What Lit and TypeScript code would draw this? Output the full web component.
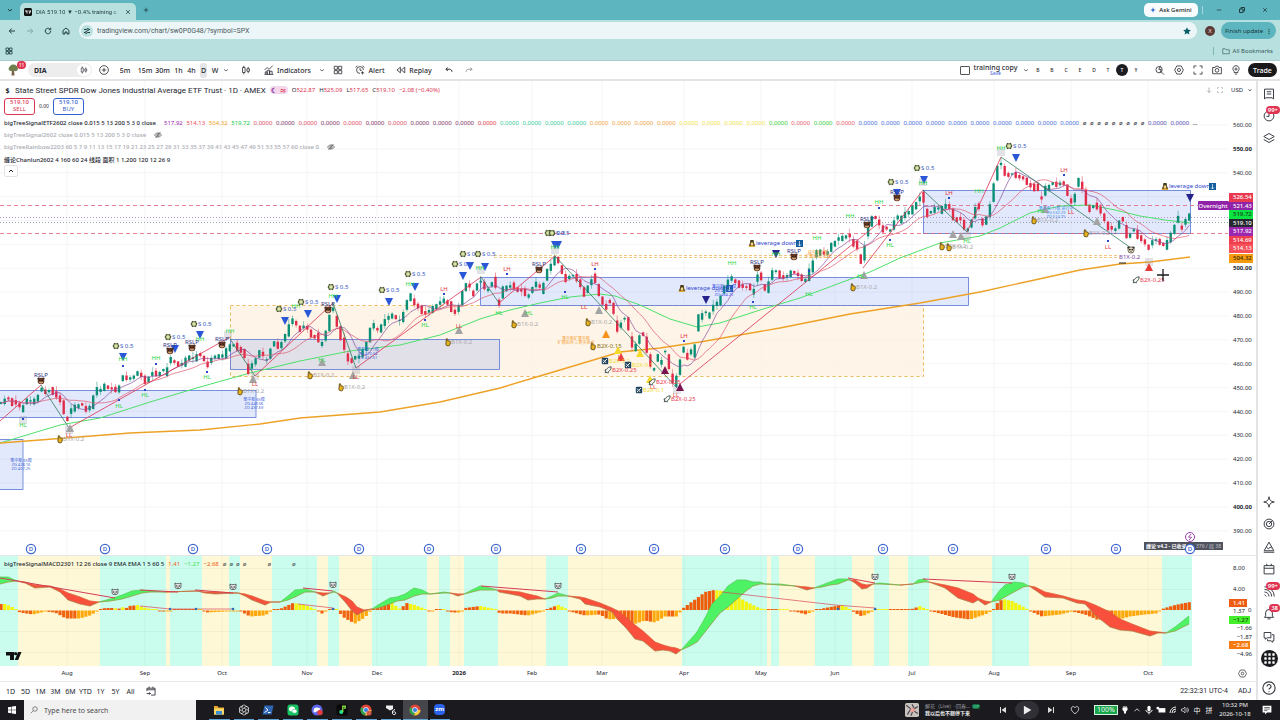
import { LitElement, html, svg, css } from "lit";
import { customElement } from "lit/decorators.js";
import { unsafeSVG } from "lit/directives/unsafe-svg.js";

type P = [number, number];

/** Turns "x,y x,y" lists into number tuples. */
const parse = (s: string): number[][] => s.trim().split(/\s+/).map((p) => p.split(",").map(Number));
const lerp = (pts: number[][], x: number, k = 1): number => {
  for (let i = 1; i < pts.length; i++) {
    if (x <= pts[i][0]) {
      const a = pts[i - 1], b = pts[i];
      return a[k] + ((b[k] - a[k]) * (x - a[0])) / (b[0] - a[0] || 1);
    }
  }
  return pts[pts.length - 1][k];
};
const join = (pts: number[][]) => pts.map((p) => `${p[0].toFixed(1)},${p[1].toFixed(1)}`).join(" ");

const PRICE = parse(`0,403 3,403 8,398 13,403 17,402 20,406 23,409 28,399 32,402 37,401 41,389 44,392 50,391 53,391 57,395 61,400 64,408 67,420 70,412 75,408 79,406 82,404 85,409 90,408 93,403 97,391 103,390 105,386 110,388 118,390 121,387 124,372 127,379 133,378 138,373 143,376 146,382 150,378 154,371 158,376 163,370 168,372 171,359 175,362 180,365 186,362 190,357 195,359 201,354 205,360 208,365 213,358 217,356 220,357 225,355 231,346 235,345 240,349 245,354 248,369 252,366 256,361 258,354 263,354 268,362 272,348 275,342 280,348 285,338 290,328 293,320 297,324 300,329 305,326 309,329 313,338 317,335 322,344 326,335 330,321 333,309 337,322 342,338 345,346 348,358 352,361 356,357 359,357 363,353 367,345 370,335 374,325 378,330 382,328 385,322 390,316 395,316 398,320 402,321 406,308 409,298 411,297 415,303 420,308 425,313 430,311 435,308 440,303 445,300 450,305 455,312 459,308 462,299 466,287 469,284 473,294 477,287 480,281 484,285 488,290 492,284 496,282 499,303 503,292 507,288 513,285 519,291 523,290 527,295 530,297 534,285 538,284 543,290 547,275 551,267 555,260 559,260 562,270 566,279 570,277 574,275 579,280 584,292 588,289 592,281 595,278 600,294 603,302 607,308 611,299 614,310 618,330 621,325 625,318 629,325 632,342 636,348 640,338 644,333 648,350 651,363 655,371 658,357 661,364 665,351 669,362 672,378 677,382 680,367 684,348 688,358 692,350 695,351 699,318 703,316 706,312 710,316 714,306 718,303 721,300 725,287 729,284 731,278 735,281 740,285 745,287 750,287 754,292 758,276 761,276 765,288 769,287 773,272 777,271 780,275 785,278 790,274 795,272 800,276 805,281 809,275 813,266 817,252 822,253 828,253 832,246 836,243 840,237 845,240 848,231 852,242 857,245 861,260 865,252 868,230 872,221 876,217 879,222 883,229 887,228 890,231 894,225 897,217 901,220 905,215 910,212 915,208 919,200 923,195 927,213 932,212 937,208 942,210 947,205 950,207 954,217 958,221 961,218 967,231 971,225 975,213 979,206 982,222 986,221 989,215 993,196 997,174 1001,164 1004,170 1008,175 1012,174 1016,175 1020,177 1024,178 1030,185 1035,188 1039,187 1041,199 1045,191 1050,187 1053,183 1058,185 1063,182 1067,189 1071,201 1075,198 1078,182 1082,185 1086,198 1090,210 1094,206 1098,206 1102,212 1105,219 1108,226 1112,228 1116,230 1120,223 1123,219 1126,231 1130,236 1134,230 1138,235 1141,238 1145,242 1148,248 1152,243 1156,240 1160,242 1164,245 1167,245 1171,237 1175,228 1178,219 1182,228 1186,221 1190,216`);
const GREEN = parse("0,443 60,425 100,418 150,402 200,387 250,373 300,361 350,351 400,345 440,335 480,319 510,310 540,303 570,297 600,294 615,296 640,305 670,319 697,327 720,323 760,310 800,298 840,283 870,272 900,258 940,243 980,236 1000,228 1030,213 1060,206 1090,205 1115,210 1140,216 1165,220 1190,223");
const ORANGE = parse("0,443 40,440 130,433 200,430 260,424 300,418 380,412 440,402 500,388 560,370 620,352 660,348 700,342 780,328 850,314 920,303 980,292 1030,281 1080,270 1120,264 1150,262 1190,257");
const MACD = parse("0,577,584 8,577,582 17,581,581 25,583,582 35,588,585 50,587,586 60,592,589 68,600,593 80,604,597 90,606,601 99,602,602 110,599,601 122,595,599 132,591,596 142,590,593 150,591,592 165,592,592 197,591,591 205,593,592 215,594,592 238,593,593 245,596,594 252,600,596 265,605,601 271,602,602 280,602,602 288,596,600 295,590,597 305,589,592 315,592,592 323,596,593 330,593,593 334,591,592 337,593,593 346,603,597 352,611,601 357,615,607 364,611,610 372,609,609 378,605,608 390,598,604 397,597,601 405,594,600 414,588,596 422,590,594 430,594,594 444,592,593 450,593,593 458,596,594 464,594,594 472,590,592 480,586,590 490,588,590 497,590,590 499,592,590 510,594,591 520,596,592 528,600,594 537,599,596 545,599,599 552,596,598 558,593,596 568,596,596 580,599,597 585,604,598 600,607,603 612,612,608 618,620,611 626,628,617 635,639,625 643,641,631 655,651,642 663,650,645 670,651,647 676,654,648 681,650,650 690,640,646 697,632,642 705,618,632 712,604,623 720,596,613 728,586,607 737,580,599 746,580,591 753,582,586 760,582,584 765,584,584 780,584,585 795,586,586 807,590,587 814,588,588 822,585,587 830,582,585 838,579,584 848,579,580 850,580,580 855,583,580 862,589,584 867,588,585 873,584,584 880,583,584 900,585,585 913,584,584 918,580,583 924,579,582 929,582,582 945,588,585 958,598,588 973,603,594 978,600,598 985,605,601 991,602,602 1000,590,600 1005,585,597 1014,582,592 1023,583,587 1029,586,586 1035,590,587 1045,597,592 1063,598,596 1077,603,600 1085,604,601 1095,615,605 1110,627,612 1120,630,619 1132,631,624 1150,636,631 1158,633,632 1166,633,633 1175,627,631 1189,616,624");
const HIST = parse("0,6 5,6 12,3 17,0 20,-2 33,-4 45,-1 55,-2 66,-8 80,-8 90,-5 99,0 105,2 115,2 118,0 121,4 125,1 129,4 138,5 142,3 150,1 165,-1 180,1 195,1 202,0 208,-2 225,-1 239,0 250,-6 265,-5 272,0 280,1 293,7 305,5 315,1 319,-1 322,-3 328,0 335,2 339,-2 345,-8 355,-13 365,-7 371,0 380,3 392,7 400,1 407,7 415,5 425,1 430,-1 437,1 444,1 452,-2 460,-2 465,2 480,4 495,1 500,-3 510,-3 528,-5 543,-1 550,2 558,5 567,1 570,-1 585,-5 600,-4 608,-9 620,-8 633,-14 645,-10 655,-12 665,-6 677,-6 682,1 690,7 700,14 705,18 714,20 724,19 735,15 745,9 757,3 765,0 780,1 795,-1 806,-4 815,0 830,3 842,5 850,1 856,-3 862,-6 870,-2 877,1 885,0 905,0 912,1 920,4 928,0 940,-3 955,-7 970,-9 985,-4 993,0 998,8 1003,11 1012,9 1020,5 1029,0 1042,-6 1060,-4 1072,-1 1085,-4 1097,-9 1115,-10 1130,-6 1145,-4 1156,-3 1162,1 1175,5 1190,8");
const BANDS = [0, 18, 100, 166, 170, 202, 229, 240, 272, 317, 328, 339, 372, 427, 439, 450, 464, 498, 546, 568, 682, 767, 771, 779, 815, 852, 874, 889, 908, 929, 992, 1029, 1162, 1192];
const MONTHS: [number, string][] = [[67, "Aug"], [145, "Sep"], [222, "Oct"], [307, "Nov"], [377, "Dec"], [459, "2026"], [532, "Feb"], [602, "Mar"], [684, "Apr"], [761, "May"], [835, "Jun"], [912, "Jul"], [994, "Aug"], [1071, "Sep"], [1148, "Oct"]];
const STEP = 3.69;

const turtle = (x: number, y: number) =>
  `<g transform="translate(${x} ${y})"><path d="M-2 -3.2 0 -2.5 2 -3.2 2.5 -1.5 3.5 0 2.5 1.5 2 3.2 0 2.5-2 3.2-2.5 1.5-3.5 0-2.5-1.5z" fill="#4a5730"/><circle r="2.1" fill="#c3cf8c"/><path d="M-1 -1 1 1M1 -1-1 1" stroke="#f0f4d0" stroke-width=".6"/></g>`;
const bear = (x: number, y: number) =>
  `<g transform="translate(${x} ${y})"><circle cx="-2.3" cy="-2.2" r="1.3" fill="#3b241c"/><circle cx="2.3" cy="-2.2" r="1.3" fill="#3b241c"/><circle r="3.3" fill="#5e3524"/><ellipse cy="1.2" rx="1.7" ry="1.3" fill="#e0ad7c"/><circle cy=".6" r=".7" fill="#160f0c"/><circle cx="-1.3" cy="-.7" r=".5" fill="#111"/><circle cx="1.3" cy="-.7" r=".5" fill="#111"/></g>`;
const panda = (x: number, y: number) =>
  `<g transform="translate(${x} ${y})"><circle cx="-2.3" cy="-2.2" r="1.4" fill="#222"/><circle cx="2.3" cy="-2.2" r="1.4" fill="#222"/><circle r="3.1" fill="#e9e2c6" stroke="#3a3020" stroke-width=".7"/><circle cx="-1.2" cy="-.4" r=".9" fill="#222"/><circle cx="1.2" cy="-.4" r=".9" fill="#222"/><circle cy="1.3" r=".6" fill="#222"/></g>`;
const hand = (x: number, y: number) =>
  `<path transform="translate(${x} ${y})" d="M-1.6 -3.2c.6-.5 1.3 0 1.3.6v1.4l1.8.3c.9.2 1 1 .8 1.8l-.5 2c-.2.8-.8 1-1.6.9l-1.6-.3c-.5-.1-.7-.6-.7-1z" fill="#e8b31f" stroke="#4a3609" stroke-width=".8"/>`;
const rocket = (x: number, y: number) =>
  `<path transform="translate(${x} ${y})" d="M3.2 -3.2C1-3.2-.7-2-1.6-.4L-3.2 0l1 1-.6 1.8 1.8-.6 1 1 .5-1.6C2 .8 3.2-1 3.2-3.2z" fill="#f4f6f4" stroke="#1f3029" stroke-width=".8"/>`;
const plane = (x: number, y: number) =>
  `<g transform="translate(${x} ${y})"><rect x="-3.2" y="-3.2" width="6.4" height="6.4" rx="1" fill="#21455f"/><path d="M-2 2 2-2M-2-1.4 1 1.8M-1 2.2-2.2 1" stroke="#f1f5f7" stroke-width="1"/></g>`;
const penguin = (x: number, y: number) =>
  `<g transform="translate(${x} ${y})"><path d="M-1.6 -3h3.2l.4 3 1.4 3.2h-6.8l1.4-3.2z" fill="#473a16"/><ellipse cy="1" rx="1.4" ry="1.8" fill="#f2d58e"/><path d="M-3 3.2h6" stroke="#e5a81c" stroke-width="1.2"/></g>`;
const down = (x: number, y: number, c = "#2a57d8") => `<path d="M${x - 4} ${y - 4}h8l-4 8z" fill="${c}"/>`;
const up = (x: number, y: number, c = "#a3a3a3") => `<path d="M${x - 4} ${y + 4}h8l-4-8z" fill="${c}"/>`;
const text = (x: number, y: number, s: string, c: string, size = 6, anchor = "start", w = 400) =>
  `<text x="${x}" y="${y + size * 0.36}" font-size="${size}" fill="${c}" text-anchor="${anchor}" font-weight="${w}">${s}</text>`;
const face = (x: number, y: number) =>
  `<g transform="translate(${x} ${y})" fill="#fff" stroke="#222" stroke-width=".7"><path d="M-3-3 -1.6-2.3h3.2L3-3 2.8 1.6C2 2.8-2 2.8-2.8 1.6z"/><circle cx="-1.2" r=".5"/><circle cx="1.2" r=".5"/><path d="M-.7 1.3h1.4"/></g>`;

function candles(): string {
  let out = "";
  const ys: number[] = [];
  const n = Math.floor(1190 / STEP);
  for (let i = 0; i <= n; i++) ys.push(lerp(PRICE, 1 + i * STEP));
  for (let i = 0; i <= n; i++) {
    const x = 1 + i * STEP;
    const d = ys[Math.min(n, i + 1)] - ys[Math.max(0, i - 1)];
    const r = ((i * 7919) % 97) / 97;
    const r2 = ((i * 104729) % 89) / 89;
    const h = 0.6 + Math.min(6, Math.abs(d) * 0.2) + r * r * 3;
    const c = d > 0.4 || (Math.abs(d) <= 0.4 && r > 0.5) ? "#e02c48" : "#0a8f76";
    out += `<path d="M${x.toFixed(1)} ${(ys[i] - h - 0.5 - r2 * r2 * 5).toFixed(1)}V${(ys[i] + h + 0.5 + (1 - r) * r2 * 5).toFixed(1)}" stroke="${c}" stroke-width=".6" opacity=".8"/><rect x="${(x - 1.2).toFixed(1)}" y="${(ys[i] - h).toFixed(1)}" width="2.4" height="${(2 * h).toFixed(1)}" fill="${c}"/>`;
  }
  const avg = (w: number) => ys.map((_, i) => [1 + i * STEP, ys.slice(Math.max(0, i - w + 1), i + 1).reduce((a, b) => a + b, 0) / Math.min(w, i + 1)]);
  out += `<polyline points="${join(avg(6))}" fill="none" stroke="#8a4a9c" stroke-width=".7"/>`;
  out += `<polyline points="${join(avg(14))}" fill="none" stroke="#e0566b" stroke-width=".7"/>`;
  return out;
}

function marks(): string {
  let o = "";
  const each = (s: string, f: (x: number, y: number) => string) => parse(s).forEach(([x, y]) => (o += f(x, y)));
  each("69,430 228,335 255,376 356,370 481,270 555,250 677,390 923,182 967,236 1001,152 1149,262 23,420", (x, y) => `<rect x="${x - 4}" y="${y - 4}" width="8" height="8" fill="#8a8f9a" opacity=".25"/>`);
  each("70,428 253,379 322,362 353,375 459,330 525,313 599,310 864,275 953,234 961,236 1045,209 1097,221", (x, y) => up(x, y));
  each("60,439 240,391 310,375 341,387 448,342 514,324 588,322 853,287 942,246 949,247 1034,220 1086,233", (x, y) => hand(x, y) + text(x + 3, y, "B1X-0.2", "#a9a9a9"));
  each("123,357 175,349 200,335 285,321 308,314 337,299 389,302 415,287 463,276 470,266 485,267 555,245 558,245 897,193 924,180 1016,158", (x, y) => down(x, y));
  each("706,300 776,254 1190,198", (x, y) => down(x, y, "#252389"));
  each("123,359 156,358 200,339 230,331 296,306 333,296 410,284 480,268 555,247 732,263 776,254 817,238 850,216 879,202 923,183 979,191 1001,148", (x, y) => text(x, y, "HH", "#27d63f", 6, "middle"));
  each("23,425 119,406 145,395 207,377 322,360 425,325 499,313 529,313 565,297 753,307 809,294 861,276 890,245 967,241 1041,211", (x, y) => text(x, y, "HL", "#27d63f", 6, "middle"));
  each("444,289 507,269 595,264 684,336 949,193 1064,170", (x, y) => text(x, y, "LH", "#e0303c", 6, "middle") + `<rect x="${x - 1}" y="${y + 4}" width="2" height="2" fill="#2b48c8"/>`);
  each("69,435 255,384 356,377 459,326 584,307 621,357 653,387 676,395 1071,212 1108,247", (x, y) => text(x, y, "LL", "#e0303c", 6, "middle"));
  each("23,419 119,400 145,390 207,372 425,320 565,292 753,302 809,271 890,240 1108,241 156,364 123,366 879,208", (x, y) => `<rect x="${x - 1}" y="${y - 1}" width="2" height="2" fill="#2b48c8"/>`);
  each("116,346 168,337 194,324 279,309 301,302 331,287 382,290 408,274 455,264 463,254 478,254 548,233 552,233 891,182 917,168 1009,146", (x, y) => turtle(x, y) + text(x + 4, y, "S 0.5", "#2f55c4"));
  each("41,381 170,351 192,348 222,345 328,310 539,270 757,268 794,257 867,225 897,198", (x, y) => text(x, y - 6, "RSLP", "#2c2f7e", 6, "middle") + bear(x, y));
  o += panda(1131, 250) + text(1119, 257, "B1X-0.2", "#7a3f9a") + `<path d="M1119 263h7" stroke="#222"/>`;
  o += up(606, 334, "#f7931a") + up(618, 350, "#f5d92b") + up(640, 353, "#f5d92b") + up(650, 379, "#f5d92b") + up(621, 357, "#ef3b3b") + up(665, 370, "#7a1450") + up(680, 387, "#7a1450") + up(1149, 267, "#e53935");
  each("605,361 628,365 639,390", (x, y) => plane(x, y) + text(x + 4, y, "B2X-0.1", "#f2dc3a"));
  each("608,370 652,382 667,399 1136,280", (x, y) => rocket(x, y) + text(x + 4, y, "B2X-0.25", "#ec4252"));
  o += hand(593, 346) + text(597, 346, "B2X-0.15", "#857018");
  each("752,243 682,288 1165,186", (x, y) => penguin(x, y) + text(x + 4, y, "leverage down", "#3548cf") + `<rect x="${x + 44}" y="${y - 3}" width="7" height="7" fill="#155e9e"/><path d="M${x + 47.5} ${y - 2}v5m-1.5-1.5 1.5 1.5 1.5-1.5" stroke="#fff" stroke-width=".7" fill="none"/>`);
  const note = (x: number, y: number, l: string[], c: string) => l.forEach((s, i) => (o += text(x, y + i * 4, s, c, 4, "middle")));
  note(21, 461, ["笔中枢 65根", "ZG 428.16", "ZD 407.25"], "#3d62d8");
  note(254, 400, ["笔中枢 65根", "ZG 449.06", "ZD 437.69"], "#3d62d8");
  note(368, 350, ["笔中枢 71根", "ZG 470.34", "ZD 457.51"], "#3d62d8");
  note(724, 287, ["笔中枢 129根", "ZG 496.30", "ZD 484.25"], "#4a55e8");
  note(1056, 209, ["笔中枢 71根 进行中", "ZG 532.29", "ZD 514.75"], "#3d8be0");
  note(576, 339, ["笔中枢扩展中枢", "扩展区间 三类买卖点"], "#f59a2e");
  note(818, 253, ["段中枢扩展", "扩展区间 三类"], "#f59a2e");
  return o;
}

const dividend = (x: number) => `<circle cx="${x}" cy="549" r="4.6" fill="#fff" stroke="#3d66cf" stroke-width="1.2"/>` + text(x, 549, "D", "#3d66cf", 6, "middle", 600);

function mainPane(): string {
  let o = "";
  for (const [x] of MONTHS) o += `<path d="M${x} 81V555" stroke="#f5f5f7"/>`;
  for (let i = 0; i < 18; i++) o += `<path d="M0 ${(125 + i * 23.87).toFixed(1)}H1228" stroke="#f5f5f7"/>`;
  o += `<rect x="230.5" y="305.5" width="693" height="71" fill="#fdf1e0" fill-opacity=".75" stroke="#eab04f" stroke-dasharray="3 3" stroke-width=".9"/>`;
  for (const [x, y, w, h] of [[-2, 390.5, 258, 27], [-2, 439.5, 25, 50], [230.5, 339.5, 269, 30], [480.5, 277.5, 488, 28], [923.5, 190.5, 267, 43]])
    o += `<rect x="${x}" y="${y}" width="${w}" height="${h}" fill="#5c83ee" fill-opacity=".18" stroke="#5a78d6" stroke-width=".8"/>`;
  o += `<path d="M494 255.5H1118M494 257.5H1118" stroke="#f0b765" stroke-dasharray="3 2" stroke-width=".8"/>`;
  o += `<path d="M0 205.5H1198M0 233.5H1228" stroke="#df5f78" stroke-dasharray="4 3" stroke-width=".8"/>`;
  o += `<path d="M0 217.5H1228" stroke="#b58cd0" stroke-dasharray="1 2" stroke-width=".9"/><path d="M0 222.5H1228" stroke="#8d95a5" stroke-dasharray="1 2" stroke-width=".9"/>`;
  o += `<polyline points="${join(GREEN)}" fill="none" stroke="#4ee06b" stroke-width="1"/><polyline points="${join(ORANGE)}" fill="none" stroke="#eda227" stroke-width="1.4"/>`;
  o += candles();
  o += `<path d="M0 421 41 385M69 428 230 337M255 376 333 303M356 368 481 277M499 303 555 256M680 384 880 222M863 268 923 190M967 232 1001 157" stroke="#d9304f" stroke-width=".8" fill="none"/>`;
  o += `<path d="M41 385 69 428M230 339 255 376M333 303 356 368M481 277 499 303M555 256 677 388M923 190 967 232M1001 157 1131 248" stroke="#2f7a5d" stroke-width=".8" fill="none"/>`;
  o += marks();
  for (const x of [31, 105, 193, 267, 359, 429, 496, 581, 654, 725, 798, 883, 953, 1046, 1116]) o += dividend(x);
  o += `<rect x="1144" y="542" width="79" height="8" fill="#50535e"/>` + text(1146, 546, "缠论 v4.2 - 已收录", "#fff", 5, "start", 700) + text(1221, 546, "376 / 段 38", "#c5c7cf", 5, "end");
  o += `<circle cx="1190" cy="537" r="4.5" fill="#fff" stroke="#9c3fb0"/><path d="M1191 534l-2.5 3.2h3L1189 540" stroke="#9c3fb0" fill="none" stroke-width=".9"/>` + dividend(1190);
  const axis: [number, number][] = [[560, 125], [550, 149], [540, 173], [500, 268]];
  for (let p = 490, y = 292; p >= 390; p -= 10, y += 23.87) axis.push([p, y]);
  for (const [p, y] of axis) o += text(1233, y, `${p}.00`, "#23262f", 6, "start", p === 550 || p === 500 || p === 400 ? 700 : 400);
  const tags: [string, number, string, string][] = [["526.54", 197, "#e8394f", "#fff"], ["521.43", 206, "#9023a8", "#fff"], ["519.72", 214, "#0be342", "#173d20"], ["519.10", 223, "#26292f", "#fff"], ["517.92", 231, "#9c27b0", "#fff"], ["514.69", 240, "#ef3f4f", "#fff"], ["514.13", 248, "#f6505a", "#fff"], ["504.32", 258, "#f59b12", "#3b2600"]];
  for (const [s, y, bg, fg] of tags) o += `<rect x="1229" y="${y - 4}" width="24" height="9" fill="${bg}"/>` + text(1233, y, s, fg, 6, "start", 500);
  o += `<rect x="1198" y="201" width="31" height="9" rx="1" fill="#9023a8"/>` + text(1213, 206, "Overnight", "#fff", 6, "middle", 500);
  o += `<path d="M1157 275h12M1163 269v12" stroke="#1b1b1b" stroke-width="1.3"/>`;
  return o;
}

function macdPane(): string {
  let o = "";
  for (let i = 1; i < BANDS.length; i++) o += `<rect x="${BANDS[i - 1]}" y="556" width="${BANDS[i] - BANDS[i - 1]}" height="110" fill="${i % 2 ? "#cbfdee" : "#fff8d6"}"/>`;
  for (const y of [568.5, 589.5, 631.5, 652.5]) o += `<path d="M0 ${y}H1192" stroke="#000" stroke-opacity=".04"/>`;
  for (const [x] of MONTHS) o += `<path d="M${x} 556V666" stroke="#000" stroke-opacity=".03"/>`;
  for (let x = 1; x < 1191; x += STEP) {
    const v = lerp(HIST, x), d = lerp(HIST, x + 2) - lerp(HIST, x - 2);
    const h = Math.max(1, Math.abs(v));
    const c = v >= 0 ? (d >= 0 ? "#ee5c0a" : "#f4f40c") : d <= 0 ? "#f0640f" : "#fda90d";
    o += `<rect x="${(x - 1.6).toFixed(1)}" y="${(v >= 0 ? 610 - h : 610.5).toFixed(1)}" width="3.2" height="${h.toFixed(1)}" fill="${c}"/>`;
  }
  for (let i = 1; i < MACD.length; i++) {
    const a = MACD[i - 1], b = MACD[i];
    const c = a[1] + b[1] < a[2] + b[2] ? "#4df265" : "#f8503c";
    o += `<path d="M${a[0]} ${a[1]}L${b[0]} ${b[1]} ${b[0]} ${b[2]} ${a[0]} ${a[2]}z" fill="${c}" stroke="${c}" stroke-width=".5"/>`;
  }
  o += `<polyline points="${join(MACD.map((m) => [m[0], m[1]]))}" fill="none" stroke="#62a94e" stroke-width=".4"/><polyline points="${join(MACD.map((m) => [m[0], m[2]]))}" fill="none" stroke="#c96a35" stroke-width=".5"/>`;
  o += `<path d="M0 578 115 598M140 590 178 592M195 590 233 593M303 588 333 591M481 586 558 592M848 578 875 583M923 579 1012 583" stroke="#d63c55" stroke-width="1" fill="none"/>`;
  o += `<path d="M140 606 170 609H233M298 604 333 608M722 592 835 605 875 608" stroke="#d9475a" stroke-width=".7" fill="none"/>`;
  for (const x of [170, 196, 233, 333, 838, 875]) o += `<circle cx="${x}" cy="609" r="1.3" fill="#2f6fb8"/>`;
  for (const [x, y] of [[115, 592], [178, 586], [233, 587], [333, 585], [558, 586], [875, 577], [1012, 577]] as P[]) o += face(x, y);
  o += `<path d="M6 652h8v8h-4v-4.5H6z" fill="#111"/><circle cx="15.6" cy="653.7" r="1.6" fill="#111"/><path d="M18 652H21.5l-3.3 8h-3.5z" fill="#111"/>`;
  const t = (s: string, y: number) => text(1252, y, s, "#23262f", 6, "end");
  o += text(1233, 568, "8.00", "#23262f") + text(1233, 589, "4.00", "#23262f") + text(1233, 611, "1.37", "#23262f") + text(1248, 610, "0", "#23262f") + t("−1.66", 628) + t("−1.87", 637) + t("−4.96", 654);
  for (const [s, y, bg, w, fg] of [["1.41", 603, "#ee5c12", 18, "#fff"], ["−1.27", 620, "#45ee2a", 21, "#174a12"], ["−2.68", 645, "#f67a10", 21, "#fff"]] as [string, number, string, number, string][])
    o += `<rect x="1229" y="${y - 4}" width="${w}" height="8" fill="${bg}"/>` + text(1233, y, s, fg, 6, "start", 500);
  return o;
}

/** Line icons on a 16 unit grid. */
const ICONS: Record<string, string> = {
  chev: `<path d="M4 6.500 8 10l4-3.500"/>`,
  back: `<path d="M14 8H3M7.500 3 2.500 8l5 5"/>`,
  fwd: `<path d="M2 8h11M8.500 3l5 5-5 5"/>`,
  reload: `<path d="M13.500 8A5.500 5.500 0 1 1 11.500 3.800M13.500 1.500v4h-4"/>`,
  home: `<path d="M2 8v6h4v-4h4v4h4V7L8 2 2 7z"/>`,
  tune: `<path d="M2 5h5M12 5h2M2 11h2M9 11h5"/><circle cx="9.500" cy="5" r="2"/><circle cx="6.500" cy="11" r="2"/>`,
  apps4: `<path d="M2 2h5v5H2zM9 2h5v5H9zM2 9h5v5H2zM9 9h5v5H9z"/>`,
  close: `<path d="M3 3l10 10M13 3 3 13"/>`,
  plus: `<path d="M8 2v12M2 8h12"/>`,
  min: `<path d="M2 8h12"/>`,
  restore: `<path d="M3 6h7v7H3zM6 6V3h7v7h-3"/>`,
  folder: `<path d="M1.500 3.500h5l1.500 2h6.500v8h-13z"/>`,
  addc: `<circle cx="8" cy="8" r="7"/><path d="M8 4.500v7M4.500 8h7"/>`,
  candle: `<path d="M4.500 1v3M4.500 12v3M2.500 4h4v8h-4zM11.500 3v3M11.500 10v3M9.500 6h4v4h-4z"/>`,
  ind: `<path d="M1 8 5 4l3 3 6-6M2 15v-4h3v4M5 15V9h4v6M9 15v-5h4v5M1 15h14"/>`,
  alert: `<path d="M13.500 8A5.500 5.500 0 1 0 8 13.500M8 5v3.500h3M1 4l3-3M15 4l-3-3M12 10v5M9.500 12.500h5"/>`,
  replay: `<path d="M7 3.500v9L1.500 8zM14 3.500v9L8.500 8z"/>`,
  undo: `<path d="M5 3 2 6.500 5.500 10M2 6.500h7c3 0 5 2 5 5"/>`,
  redo: `<path d="m11 3 3 3.500L10.500 10M14 6.500H7c-3 0-5 2-5 5"/>`,
  searchp: `<circle cx="6.500" cy="7.500" r="5"/><path d="m10 11 4.500 4.500M9 1 6 7h4l-2 5"/>`,
  hex: `<path d="M4.500 1.500h7L15 8l-3.500 6.500h-7L1 8z"/><circle cx="8" cy="8" r="2.500"/>`,
  full: `<path d="M1.500 5.500v-4h4M10.500 1.500h4v4M14.500 10.500v4h-4M5.500 14.500h-4v-4"/>`,
  cam: `<path d="M1 4h4l1-2h4l1 2h4v10H1z"/><circle cx="8" cy="8.500" r="3"/>`,
  bulb: `<path d="M8 1a5 5 0 0 1 3 9v2H5v-2a5 5 0 0 1 3-9zM6 14.500h4M8 4v5M5.500 6.500h5"/>`,
  list: `<path d="M2 1.500h12v13l-2-1.500H4l-2 1.500zM5 5h6M5 8h6"/>`,
  clock: `<circle cx="8" cy="8" r="6.500"/><path d="M8 4v4.500H4.500"/>`,
  layers: `<path d="M8 2 1 6l7 4 7-4zM1 10l7 4 7-4"/>`,
  spark: `<path d="M8 1c.5 4.500 2.500 6.500 7 7-4.500.500-6.500 2.500-7 7-.500-4.500-2.500-6.500-7-7 4.500-.500 6.500-2.500 7-7z"/>`,
  target: `<circle cx="8" cy="8" r="6.500"/><circle cx="8" cy="8" r="3.500"/><path d="M8 8l5-5"/>`,
  pyramid: `<path d="M8 1.500 14.500 13h-13zM4.500 8.500l3 2 2-2.500 2 1.500M1 15h14"/>`,
  cal: `<path d="M1.500 3.500h13v11h-13zM1.500 7h13M5 1v3M11 1v3"/>`,
  cast: `<path d="M2 8a6 6 0 0 1 6 6M2 4.500A9.500 9.500 0 0 1 11.500 14M2 1a13 13 0 0 1 13 13M2 11.500 4.500 14"/>`,
  bell: `<path d="M2 12.500h12l-1.500-2V6.500a4.500 4.500 0 0 0-9 0v4zM6 14.500h4"/>`,
  chat: `<path d="M1.500 2h9v7h-5l-2.500 2V9H1.500zM12 5h2.500v8H13v2l-2.500-2H6v-2"/>`,
  help: `<circle cx="8" cy="8" r="7"/><path d="M5.800 6.200a2.200 2.200 0 1 1 3.200 2c-.700.400-1 .800-1 1.600M8 11.300v1"/>`,
  eye: `<path d="M1 8c3.500-5.500 10.500-5.500 14 0-3.500 5.500-10.500 5.500-14 0zM3 14 13 2"/><circle cx="8" cy="8" r="2.500"/>`,
  caret: `<path d="M4 10l4-4 4 4"/>`,
  arrdn: `<path d="M8 3v10M4.500 9.500 8 13l3.500-3.500"/>`,
  goto: `<path d="M1.500 8V3.500h13v11H8M1.500 6h13M5 1v3M11 1v3M1 12h6M5 10l2 2-2 2"/>`,
  mag: `<circle cx="10" cy="6" r="4.500"/><path d="M6.500 9.500 1.500 14.500"/>`,
  heart: `<path d="M8 14C-1 8 2 2 5.500 2.500 7 2.700 8 4.500 8 4.500S9 2.700 10.500 2.500C14 2 17 8 8 14z"/>`,
  wifi: `<path d="M2 14A12 12 0 0 1 14 2M6 14a8 8 0 0 1 8-8M10 14a4 4 0 0 1 4-4"/>`,
  vol: `<path d="M1 6h3l4-4v12l-4-4H1zM11 5a5 5 0 0 1 0 6M13 3a8 8 0 0 1 0 10"/>`,
};
const icon = (n: string, cls = "i10") => html`<svg class="ic ${cls}" viewBox="0 0 16 16" aria-hidden="true">${svg`${unsafeSVG(ICONS[n])}`}</svg>`;
const pic = (body: string, cls = "i12") => html`<svg class=${cls} viewBox="0 0 24 24" aria-hidden="true">${svg`${unsafeSVG(body)}`}</svg>`;

const CHROME = `<circle cx="12" cy="12" r="11" fill="#e04434"/><path d="M12 12 2.500 6.500A11 11 0 0 0 11 23z" fill="#2fa24c"/><path d="M12 12h11a11 11 0 0 1-12 11z" fill="#f8cb38"/><circle cx="12" cy="12" r="5" fill="#3c7de0" stroke="#fff" stroke-width="1.500"/>`;
const TASKS: [string, string][] = [
  ["Files", `<path d="M2 4h7l2 3h11v14H2z" fill="#e6a92b"/><path d="M2 9h20v12H2z" fill="#fcd667"/><path d="M6 14h12v7H6z" fill="#3a8fd6"/>`],
  ["Assistant", `<g fill="none" stroke="#e8e8e8" stroke-width="1.600">${[0, 60, 120, 180, 240, 300].map((a) => `<path d="M8 9V6a4 4 0 0 1 7-2.500l3 2" transform="rotate(${a} 12 12)"/>`).join("")}<path d="M12 8l3.500 2v4L12 16l-3.500-2v-4z"/></g>`],
  ["Shell", `<path d="M5 3h18l-4 18H1z" fill="#2f66b5"/><path d="m7 7 5 5-7 5M12 17h5" stroke="#fff" stroke-width="2" fill="none"/>`],
  ["Chat", `<rect x="1" y="1" width="22" height="22" rx="5" fill="#18c161"/><ellipse cx="10" cy="10" rx="6" ry="5" fill="#fff"/><ellipse cx="15" cy="14.500" rx="5" ry="4" fill="#fff" stroke="#18c161"/>`],
  ["Voice", `<circle cx="12" cy="12" r="11" fill="#5b66ea"/><path d="M6 9c4-3 8-3 12 0l1 7-4 1-1-2h-4l-1 2-4-1z" fill="#fff"/><circle cx="18" cy="17" r="5.500" fill="#e23b43"/>`],
  ["Music", `<rect x="1" y="1" width="22" height="22" rx="5" fill="#090909"/><circle cx="10.500" cy="16" r="4" fill="#1fe08d"/><path d="M13.500 16V4h5v4h-3" stroke="#8be646" stroke-width="2.500" fill="none"/>`],
  ["Browser", CHROME + `<circle cx="18" cy="18" r="5" fill="#d35b48"/>`],
  ["Charts", `<path d="M2 3h14v7l-6 3L2 8z" fill="#eee"/><path d="M20 11c-4 1-6 4-5 8 2 4 8 2 6-2-1-2-4-2-5 0" stroke="#fff" stroke-width="2" fill="none"/>`],
  ["Chrome", CHROME],
];

const base = css`
  * { box-sizing: border-box; }
  :host { box-sizing: border-box; }
  button, input, select { font: inherit; color: inherit; border: 0; background: none; padding: 0; margin: 0; }
  button { display: flex; align-items: center; justify-content: center; gap: 3px; white-space: nowrap; cursor: pointer; }
  a { color: inherit; text-decoration: none; }
  .ic { fill: none; stroke: currentColor; stroke-width: 1.3; flex: none; display: block; }
  .i6 { width: 6px; height: 6px; } .i8 { width: 8px; height: 8px; } .i10 { width: 10px; height: 10px; }
  .i12 { width: 12px; height: 12px; display: block; } .i14 { width: 14px; height: 14px; display: block; }
  .bold { stroke-width: 2; }
`;

@customElement("browser-chrome")
export class BrowserChrome extends LitElement {
  static styles = [base, css`
    :host { display: block; background: #b8e0df; color: #1f3c3e; font-size: 6px; }
    .tabs { display: flex; height: 20px; background: #5db5bf; align-items: center; padding: 0 4px; }
    .drop { width: 12px; height: 12px; }
    .tab { display: flex; align-items: center; align-self: flex-end; gap: 4px; width: 116px; height: 17px; margin-left: 4px; padding: 0 5px 0 4px; background: #b8e0df; border-radius: 5px 5px 0 0; }
    .fav { width: 8px; height: 8px; flex: none; }
    .tab a { flex: 1; overflow: hidden; white-space: nowrap; font-family: Roboto, sans-serif; -webkit-mask: linear-gradient(90deg, #000 90%, transparent); }
    .add { width: 20px; height: 20px; }
    .grow { flex: 1; }
    .gem { height: 14px; width: 54px; background: #f8fcfc; border-radius: 5px; font-weight: 500; color: #222; }
    .win { width: 23px; height: 20px; }
    .sep { width: 1px; height: 8px; background: #a9d8dc; margin: 0 4px; }
    .nav { display: flex; height: 21px; align-items: center; padding: 0 4px 0 3px; }
    .nb { width: 18px; height: 18px; color: #203b3d; }
    .dim { color: #7fa7a8; }
    .addr { display: flex; flex: 1; align-items: center; height: 17px; margin-left: 4px; background: #ecf6f8; border-radius: 9px; padding: 0 6px 0 2px; gap: 4px; }
    .site { width: 12px; height: 12px; border-radius: 6px; background: #b8e0df; }
    .addr input { flex: 1; height: 14px; outline: 0; color: #48595c; font-family: Roboto, sans-serif; font-size: 7px; }
    .me { width: 10px; height: 10px; border-radius: 5px; background: #5b3a36; color: #f1d9d4; margin: 0 6px 0 8px; }
    .upd { height: 17px; width: 55px; background: #5db5bf; border-radius: 9px; color: #173538; }
    .marks { display: flex; height: 20px; align-items: center; justify-content: space-between; padding: 0 7px 0 5px; border-bottom: 1px solid #a8cfce; color: #35575a; }
    .all { border-left: 1px solid #7fb3b6; padding-left: 8px; height: 8px; }
  `];
  render() {
    return html`
      <div class="tabs">
        <button class="drop" aria-label="Search tabs">${icon("chev", "i8 bold")}</button>
        <div class="tab">
          <svg class="fav" viewBox="0 0 16 16"><rect width="16" height="16" rx="3" fill="#111" /><path d="M2 5h5v6H5V7H2zM9 5h2v2H9zM12 5h2.500l-2.500 6H9.500z" fill="#fff" /></svg>
          <a href="#">DIA 519.10 ▼ −0.4% training c</a>
          <button aria-label="Close tab">${icon("close", "i6 bold")}</button>
        </div>
        <button class="add" aria-label="New tab">${icon("plus", "i6 bold")}</button>
        <span class="grow"></span>
        <button class="gem"><svg class="i6" viewBox="0 0 16 16"><path d="M8 0c.5 5 3 7.500 8 8-5 .5-7.500 3-8 8-.5-5-3-7.500-8-8 5-.5 7.500-3 8-8z" fill="#356bd6" /></svg>Ask Gemini</button>
        <span class="sep"></span>
        <button class="win" aria-label="Minimize">${icon("min", "i6 bold")}</button>
        <button class="win" aria-label="Restore">${icon("restore", "i8 bold")}</button>
        <button class="win" aria-label="Close">${icon("close", "i6 bold")}</button>
      </div>
      <div class="nav">
        <button class="nb" aria-label="Back">${icon("back", "i8 bold")}</button>
        <button class="nb dim" aria-label="Forward">${icon("fwd", "i8 bold")}</button>
        <button class="nb" aria-label="Reload">${icon("reload", "i8 bold")}</button>
        <button class="nb" aria-label="Home">${icon("home", "i8 bold")}</button>
        <div class="addr">
          <button class="site" aria-label="Site information">${icon("tune", "i8 bold")}</button>
          <input aria-label="Address" value="tradingview.com/chart/sw0P0G48/?symbol=SPX" />
          <svg class="i8" viewBox="0 0 16 16"><path d="m8 .5 2.300 5 5.400.600-4 3.700 1.100 5.400L8 12.500l-4.800 2.700 1.100-5.400-4-3.700 5.400-.600z" fill="#0a6067" /></svg>
        </div>
        <button class="me" aria-label="Profile">X</button>
        <button class="upd">Finish update <b>⋮</b></button>
      </div>
      <div class="marks">
        <button aria-label="Apps">${icon("apps4", "i8 bold")}</button>
        <button class="all">${icon("folder", "i8")} All Bookmarks</button>
      </div>`;
  }
}

@customElement("chart-toolbar")
export class ChartToolbar extends LitElement {
  static styles = [base, css`
    :host { display: flex; height: 20px; align-items: center; justify-content: space-between; background: #fff; border-bottom: 2px solid #e3e3e6; font-size: 7px; font-weight: 500; color: #2a2c33; }
    .left { display: grid; height: 18px; align-items: center; grid-template-columns: 26px 68px 19px 24px 16px 19px 13px 13px 11px 12px 10px 30px 53px 16px 15px 50px 38px 31px 10px; }
    .right, .letters, .tools { display: flex; align-items: center; }
    .avatar { position: relative; }
    .count { position: absolute; right: 0; top: -3px; background: #e0334f; color: #fff; border-radius: 5px; font-size: 5px; line-height: 8px; width: 9px; }
    .sym { margin: 0 2px; height: 14px; border-radius: 7px; background: #ededee; display: flex; align-items: center; justify-content: space-between; }
    .sym input { width: 40px; padding-left: 6px; font-weight: 700; }
    .cmp { width: 14px; height: 12px; border-radius: 6px; background: #fff; margin-right: 1px; }
    .on { background: #e4e4e6; border-radius: 3px; height: 15px; margin: 0 2px; }
    .soft { color: #999; }
    .name { width: 49px; display: block; line-height: 7px; }
    .name small { display: block; color: #3e63d8; font-size: 5px; line-height: 5px; font-weight: 400; }
    .cb { width: 13px; display: flex; justify-content: center; }
    .cb input { appearance: none; width: 10px; height: 9px; border: 1px solid #555; border-radius: 1px; }
    .dd { width: 11px; }
    .letters button { width: 14px; height: 12px; font-size: 5px; }
    .letters .cur { width: 12px; margin: 0 1px; background: #1c1d20; color: #fff; border-radius: 6px; }
    .tools { margin-left: 7px; padding-right: 3px; }
    .tools button { width: 19px; height: 16px; }
    .tools .trade { width: 29px; height: 14px; background: #19191b; color: #fff; border-radius: 7px; margin-left: 3px; }
  `];
  render() {
    return html`
      <div class="left">
        <button class="avatar" aria-label="Menu"><svg class="i12" viewBox="0 0 24 24"><path d="M10 12h4l1 11H9z" fill="#7b6148" /><path d="M12 1c6 0 10 4 10 8s-4 6-7 5-5 1-8 0-5-4-3-7 4-6 8-6z" fill="#6f7f4d" /></svg><span class="count">11</span></button>
        <div class="sym"><input aria-label="Symbol" value="DIA" /><button class="cmp" aria-label="Chart style">${icon("candle", "i8")}</button></div>
        <button aria-label="Compare">${icon("addc")}</button>
        ${["5m", "15m", "30m", "1h", "4h", "D", "W"].map((t) => html`<button class=${t === "D" ? "on" : ""}>${t}</button>`)}
        <button aria-label="More intervals">${icon("chev", "i8")}</button>
        <button aria-label="Candles">${icon("candle")}</button>
        <button>${icon("ind")} Indicators</button>
        <button aria-label="Favorites">${icon("chev", "i8")}</button>
        <button aria-label="Templates">${icon("apps4")}</button>
        <button>${icon("alert")} Alert</button>
        <button>${icon("replay")} Replay</button>
        <button aria-label="Undo">${icon("undo", "i8 bold")}</button>
        <button class="soft" aria-label="Redo">${icon("redo", "i8 bold")}</button>
      </div>
      <div class="right">
        <label class="cb"><input type="checkbox" aria-label="Layout" /></label>
        <button class="name">training copy<small>Save</small></button>
        <button class="dd" aria-label="Layouts">${icon("chev", "i8")}</button>
        <div class="letters">${[..."BBCEDTTY"].map((c, i) => html`<button class=${i === 6 ? "cur" : ""}>${c}</button>`)}</div>
        <div class="tools">
          ${["searchp", "hex", "full", "cam", "bulb"].map((n) => html`<button aria-label=${n}>${icon(n, "i10")}</button>`)}
          <button class="trade">Trade</button>
        </div>
      </div>`;
  }
}

@customElement("chart-area")
export class ChartArea extends LitElement {
  static styles = [base, css`
    :host { display: block; flex: 1; min-width: 0; background: #fff; font-size: 6px; color: #23262f; }
    .pane { position: relative; }
    .cv { display: block; width: 100%; height: auto; }
    .split { border-top: 1px solid #e6e6ea; }
    .legend { position: absolute; left: 4px; right: 58px; top: 2px; }
    .row { display: flex; align-items: center; height: 12px; gap: 4px; white-space: nowrap; }
    .desc { font-weight: 500; }
    .first { gap: 8px; }
    .title { height: 14px; font-size: 8px; }
    .full { font-family: Roboto, sans-serif; }
    .ohlc { font-size: 6px; display: flex; gap: 4px; }
    .red { color: #dc3550; }
    .coin { width: 7px; font-size: 7px; font-weight: 700; text-align: center; }
    .moon { display: flex; width: 18px; height: 8px; border-radius: 4px; background: #f4d7ea; color: #7a1fa0; align-items: center; justify-content: space-around; font-size: 7px; }
    .trade { display: flex; align-items: center; gap: 4px; height: 20px; padding-bottom: 2px; }
    .trade button { width: 31px; height: 17px; border: 1px solid; border-radius: 3px; flex-direction: column; gap: 0; font-size: 6px; line-height: 7px; background: #fff; }
    .trade b { font-weight: 500; }
    .buy { color: #3560cf; }
    .trade span { font-size: 5px; }
    .vals { display: flex; flex: 1; justify-content: space-between; }
    .off { color: #a9abb2; gap: 8px; }
    .off .ic { color: #444; }
    .col { width: 14px; height: 12px; border: 1px solid #e3e3e6; border-radius: 2px; background: #fff; }
    .cur { position: absolute; right: 3px; top: 4px; display: flex; align-items: center; gap: 4px; color: #8a8d96; }
    .cur select { appearance: none; width: 16px; height: 10px; color: #23262f; }
    .cur label { display: flex; align-items: center; color: #23262f; margin-left: 4px; }
    .mleg { position: absolute; left: 4px; top: 2px; }
    .empty { display: flex; gap: 3px; color: #3a3d46; }
    .wide { margin-left: 18px; }
    .bar { display: flex; height: 19px; align-items: center; justify-content: space-between; border-top: 1px solid #e9e9ec; padding: 0 5px 0 4px; font-size: 7px; }
    .rng, .tz { display: flex; gap: 2px; }
    .rng button { min-width: 13px; height: 14px; }
    .rng .go { margin-left: 5px; }
    .tz { gap: 10px; font-family: Roboto, sans-serif; }
  `];
  private zeros = ["#e0455c", "#7b2a63", "#e0455c", "#7b2a63", "#e0455c", "#7b2a63", "#e0455c", "#7b2a63", "#7b2a63", "#7b2a63", "#e0303c",
    ...Array(4).fill("#2ecc9a"), ...Array(4).fill("#f2a33a"), ...Array(4).fill("#f0e33e"), "#2bd02f", "#e8566a", "#2bd02f", "#e8566a", ...Array(10).fill("#4169d8")];
  render() {
    return html`
      <div class="pane">
        <svg class="cv" viewBox="0 81 1256 474">${svg`${unsafeSVG(mainPane())}`}</svg>
        <div class="legend">
          <div class="row title">
            <span class="coin">$</span><span class="full">State Street SPDR Dow Jones Industrial Average ETF Trust · 1D · AMEX</span>
            <span class="moon"><b>☾</b><b class="red">≈</b></span>
            <span class="ohlc"><span>O<span class="red">522.87</span></span><span>H<span class="red">525.09</span></span><span>L<span class="red">517.65</span></span><span>C<span class="red">519.10</span></span><span class="red">−2.08 (−0.40%)</span></span>
          </div>
          <div class="trade">
            <button class="red"><b>519.10</b>SELL</button><span>0.00</span><button class="buy"><b>519.10</b>BUY</button>
          </div>
          <div class="row first">
            <span class="desc">bigTreeSignalETF2602 close 0.015 5 13 200 5 3 0 close</span>
            <div class="vals">
              <span style="color:#9c27b0">517.92</span><span style="color:#ee4a58">514.13</span><span style="color:#ef9f1c">504.32</span><span style="color:#17cf4c">519.72</span>
              ${this.zeros.map((c) => html`<span style="color:${c}">0.0000</span>`)}
              ${Array(9).fill(0).map(() => html`<span>ø</span>`)}
              <span style="color:#4b3fb0">0.0000</span><span style="color:#4b3fb0">0.0000</span><span>…</span>
            </div>
          </div>
          <div class="row off"><span class="desc">bigTreeSignal2602 close 0.015 5 13 200 5 3 0 close</span>${icon("eye", "i8")}</div>
          <div class="row off"><span class="desc">bigTreeRainbow2203 60 5 7 9 11 13 15 17 19 21 23 25 27 29 31 33 35 37 39 41 43 45 47 49 51 53 55 57 60 close 0</span>${icon("eye", "i8")}</div>
          <div class="row"><span class="desc">缠论Chanlun2602 4 160 60 24 线段 面积 1 1,200 120 12 26 9</span></div>
          <button class="col" aria-label="Collapse legend">${icon("caret", "i8 bold")}</button>
        </div>
        <div class="cur">
          <button aria-label="Scroll">${icon("arrdn", "i8")}</button><button aria-label="Maximize">${icon("full", "i6")}</button>
          <label><select aria-label="Currency"><option>USD</option></select>${icon("chev", "i6 bold")}</label>
        </div>
      </div>
      <div class="pane split">
        <svg class="cv" viewBox="0 556 1256 111">${svg`${unsafeSVG(macdPane())}`}</svg>
        <div class="row mleg">
          <span class="desc">bigTreeSignalMACD2301 12 26 close 9 EMA EMA 1 5 60 5</span>
          <span style="color:#ee5c12">1.41</span><span style="color:#3fdc4a">−1.27</span><span style="color:#ee5c12">−2.68</span>
          <span class="empty"><span>ø</span><span>ø</span><span>ø</span><span>ø</span><span class="wide">ø</span><span class="wide">ø</span></span>
        </div>
      </div>
      <svg class="cv" viewBox="0 667 1256 14">${svg`${unsafeSVG(MONTHS.map(([x, m]) => text(x, 673, m, "#23262f", 6, "middle", m === "2026" ? 700 : 400)).join("") + `<g fill="none" stroke="#444" stroke-width=".8"><path d="M1240.500 670h4l2 3.500-2 3.500h-4l-2-3.500z"/><circle cx="1242.500" cy="673.500" r="1.300"/></g>`)}`}</svg>
      <div class="bar">
        <div class="rng">${["1D", "5D", "1M", "3M", "6M", "YTD", "1Y", "5Y", "All"].map((t) => html`<button>${t}</button>`)}<button class="go" aria-label="Go to date">${icon("goto")}</button></div>
        <div class="tz"><button>22:32:31 UTC-4</button><button>ADJ</button></div>
      </div>`;
  }
}

@customElement("side-rail")
export class SideRail extends LitElement {
  static styles = [base, css`
    :host { display: flex; flex-direction: column; justify-content: space-between; width: 24px; border-left: 2px solid #e3e3e6; background: #fff; color: #383a42; padding: 4px 0 3px; }
    .grp { display: flex; flex-direction: column; gap: 4px; align-items: center; }
    .grp button { position: relative; width: 22px; height: 18px; }
    .low { height: 175px; justify-content: space-between; gap: 0; }
    .help { margin-top: 11px; }
    .n { position: absolute; top: -1px; right: 0; background: #e0334f; color: #fff; font-size: 6px; line-height: 8px; border-radius: 4px; padding: 0 2px; font-weight: 600; }
  `];
  render() {
    const b = (n: string, c = "") => html`<button aria-label=${n}>${icon(n, "i12")}${c ? html`<span class="n">${c}</span>` : ""}</button>`;
    return html`
      <div class="grp">${b("list")}${b("clock", "99+")}${b("layers")}</div>
      <div>
        <div class="grp low">
          ${b("spark")}${b("target")}${b("pyramid")}${b("cal")}${b("cast", "99+")}${b("bell", "38")}${b("chat")}
          <button aria-label="Products"><svg width="17" height="17" viewBox="0 0 17 17"><circle cx="8.500" cy="8.500" r="8.500" fill="#1b1c20" />${[4.5, 8.5, 12.5].map((y) => [4.5, 8.5, 12.5].map((x) => svg`<rect x=${x - 1.2} y=${y - 1.2} width="2.400" height="2.400" rx=".5" fill="#fff" />`))}</svg></button>
        </div>
        <div class="grp help"><button aria-label="Help">${icon("help", "i14")}</button></div>
      </div>`;
  }
}

@customElement("task-bar")
export class TaskBar extends LitElement {
  static styles = [base, css`
    :host { display: flex; height: 20px; align-items: center; justify-content: space-between; background: #1b1b1f; color: #f2f2f2; font-size: 7px; }
    .l, .r { display: flex; align-items: center; height: 20px; }
    .start { width: 24px; height: 20px; }
    .find { display: flex; align-items: center; gap: 6px; width: 172px; height: 20px; background: #f1f1f2; color: #4b4b4e; padding-left: 6px; margin-right: 11px; }
    .find input { flex: 1; font-size: 7px; outline: 0; }
    .find input::placeholder { color: #4b4b4e; opacity: 1; }
    .apps { display: grid; grid-template-columns: repeat(10, 1fr); width: 245px; }
    .apps button { height: 20px; margin: 0 2px; border-bottom: 1px solid #5fa5d8; }
    .apps .act { background: #45464b; margin: 0; }
    .zm { width: 11px; height: 11px; border-radius: 4px; background: #2a62ea; color: #fff; font-size: 6px; font-weight: 700; line-height: 10px; }
    .song { display: flex; gap: 6px; width: 86px; font-size: 5px; line-height: 7px; }
    .song div { white-space: nowrap; }
    .gray { color: #9a9aa0; }
    .vip { font-size: 4px; background: #176b45; color: #5cf0ae; border-radius: 2px; padding: 0 1px; margin-left: 2px; }
    .med { width: 24px; height: 20px; }
    .play { background: #303036; border-radius: 10px; height: 18px; }
    .bat { background: #17a64b; border: 1px solid #d8f5e1; width: 24px; height: 10px; line-height: 8px; text-align: center; margin: 0 1px 0 7px; }
    .t { width: 12px; height: 20px; display: flex; align-items: center; justify-content: center; }
    .clock { width: 40px; text-align: center; font-size: 6px; line-height: 9px; }
    .note { width: 25px; height: 20px; padding-right: 2px; }
  `];
  render() {
    return html`
      <div class="l">
        <button class="start" aria-label="Start"><svg class="i8" viewBox="0 0 16 16"><path d="M0 2.300 7 1.300v6.200H0zM8 1.200 16 0v7.500H8zM0 8.500h7v6.200l-7-1zM8 8.500h8V16l-8-1.200z" fill="#fff" /></svg></button>
        <label class="find">${icon("mag", "i8")}<input placeholder="Type here to search" aria-label="Search" /></label>
        <div class="apps">
          ${TASKS.map(([n, p]) => html`<button class=${n === "Chrome" ? "act" : ""} aria-label=${n}>${pic(p)}</button>`)}
          <button aria-label="Zoom"><span class="zm">zm</span></button>
        </div>
      </div>
      <div class="r">
        <div class="song">
          <svg class="i14" viewBox="0 0 24 24"><rect width="24" height="24" rx="3" fill="#c8c2bd" /><path d="M2 4l8 6-6 10M12 2l4 8 6-4M10 22l4-9 8 5" stroke="#4e4650" stroke-width="2" fill="none" /><circle cx="13" cy="12" r="4" fill="#e9a29a" /></svg>
          <div><span class="gray">解花（Live）-回春...</span><span class="vip">VIP</span><br /><b>我以后也不想停下来</b></div>
        </div>
        <button class="med" aria-label="Previous"><svg class="i8" viewBox="0 0 16 16"><path d="M2 2h2v12H2zM14 2v12L5 8z" fill="#ddd" /></svg></button>
        <button class="med play" aria-label="Play"><svg class="i10" viewBox="0 0 16 16"><path d="M3 1v14l12-7z" fill="#eee" /></svg></button>
        <button class="med" aria-label="Next"><svg class="i8" viewBox="0 0 16 16"><path d="M12 2h2v12h-2zM2 2v12l9-6z" fill="#ddd" /></svg></button>
        <button class="med" aria-label="Like">${icon("heart")}</button>
        <span class="bat">100%</span>
        <span class="t"><svg class="i8" viewBox="0 0 16 16"><path d="M5 0h2v3h2V0h2v3h2v5l-3 3v4H6v-4L3 8V3h2z" fill="#fff" /></svg></span>
        <button class="t" aria-label="Hidden icons">${icon("caret", "i10")}</button>
        <button class="t" aria-label="Microphone"><svg class="i10" viewBox="0 0 16 16"><rect x="5.500" y="1" width="5" height="9" rx="2.500" fill="#fff" /><path d="M3 8c0 5 10 5 10 0M8 12v3" stroke="#fff" fill="none" stroke-width="1.500" /></svg></button>
        <button class="t" aria-label="Battery"><svg class="i10" viewBox="0 0 16 16"><path d="M4 5h11v7H4z" fill="#fff" /><path d="M1 3v4h4V3" fill="#fff" /></svg></button>
        <button class="t" aria-label="Network">${icon("wifi", "i8 bold")}</button>
        <button class="t" aria-label="Volume">${icon("vol", "i8")}</button>
        <button class="t">中</button>
        <button class="t">拼</button>
        <div class="clock">10:32 PM<br />2026-10-18</div>
        <button class="note" aria-label="Notifications"><svg class="i10" viewBox="0 0 16 16"><path d="M1 1h14v11H8l-3 3v-3H1z" fill="#fff" /><path d="M3.500 4h9M3.500 6.500h9M3.500 9h5" stroke="#1b1b1f" /></svg></button>
      </div>`;
  }
}

@customElement("app-root")
export class AppRoot extends LitElement {
  static styles = css`
    :host { display: flex; flex-direction: column; min-height: 100vh; overflow: hidden; background: #fff; font-family: "Noto Sans", "Noto Sans CJK SC", sans-serif; }
    .main { display: flex; flex: 1; }
  `;
  render() {
    return html`
      <browser-chrome></browser-chrome>
      <chart-toolbar></chart-toolbar>
      <div class="main"><chart-area></chart-area><side-rail></side-rail></div>
      <task-bar></task-bar>`;
  }
}
